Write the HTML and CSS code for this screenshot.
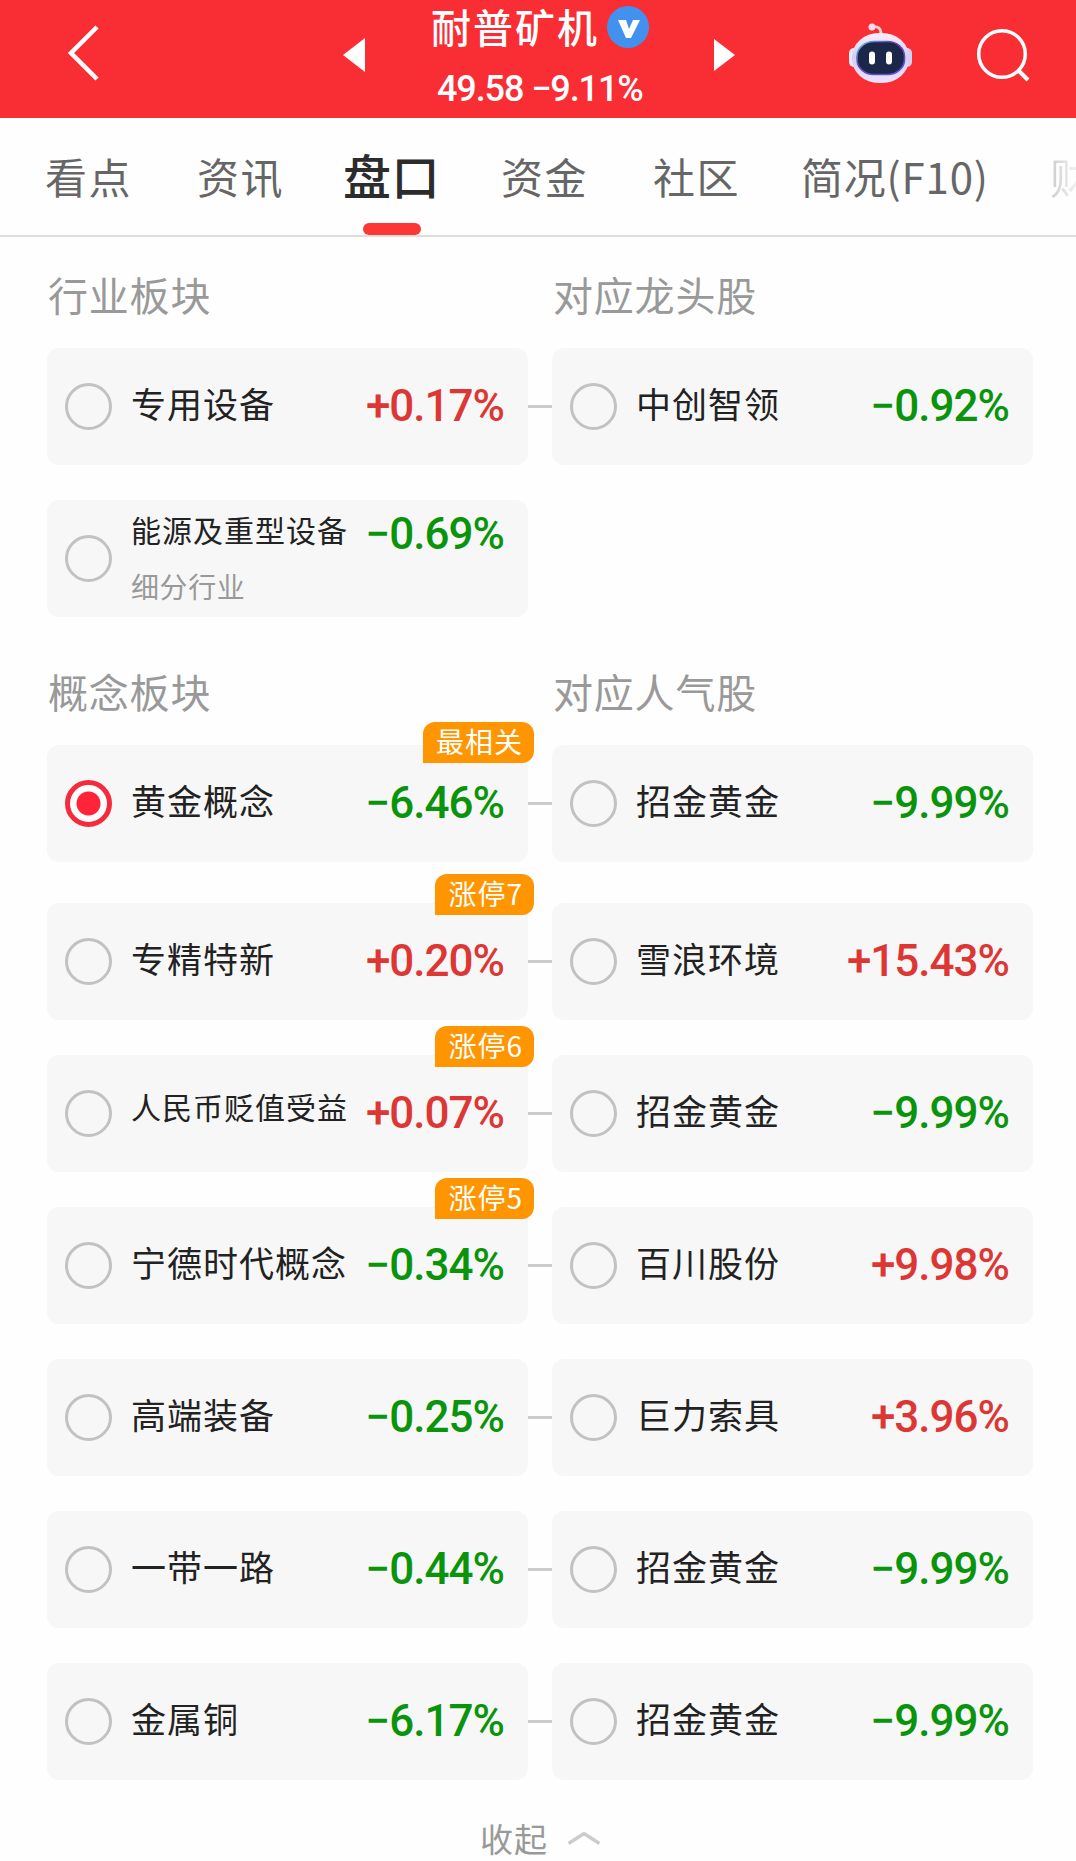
FILE: index.html
```html
<!DOCTYPE html>
<html lang="zh-CN">
<head>
<meta charset="utf-8">
<title>耐普矿机</title>
<link rel="stylesheet" href="styles.css">
</head>
<body>
<header class="header">
  <svg class="back" width="40" height="64" viewBox="0 0 40 64"><path d="M33 7 7 33 33 59" fill="none" stroke="#fff" stroke-width="4.5"/></svg>
  <svg class="prev" width="22" height="36" viewBox="0 0 22 36"><path d="M22 1v34L0 18z" fill="#fff"/></svg>
  <div class="stock">
    <div class="stock-name"><span>耐普矿机</span>
      <svg width="42" height="42" viewBox="0 0 42 42"><circle cx="21" cy="21" r="21" fill="#4391ee"/><path d="M11 14h8l3 9 4-9h7L24 32h-5z" fill="#fff"/></svg>
    </div>
    <div class="stock-price">49.58 −9.11%</div>
  </div>
  <svg class="next" width="22" height="36" viewBox="0 0 22 36"><path d="M0 2v32L21 18z" fill="#fff"/></svg>
  <svg class="robot" width="64" height="62" viewBox="0 0 64 62">
    <defs>
      <linearGradient id="shell" x1="0" y1="0" x2="0" y2="1"><stop offset="0" stop-color="#fbeefa"/><stop offset=".5" stop-color="#d3cff5"/><stop offset="1" stop-color="#eee2fb"/></linearGradient>
      <linearGradient id="rim" x1="0" y1="0" x2="1" y2="1"><stop offset="0" stop-color="#55c4df"/><stop offset=".4" stop-color="#6941b5"/><stop offset="1" stop-color="#5657d9"/></linearGradient>
    </defs>
    <path d="M23 6c6-1 9 1 9 7" fill="none" stroke="#ffd5df" stroke-width="2.6"/><circle cx="23" cy="6" r="3.500" fill="#ffdce4"/>
    <rect x="0" y="27" width="10" height="19" rx="5" fill="#eee7fb"/><rect x="53" y="27" width="10" height="19" rx="5" fill="#d6cdf5"/>
    <rect x="3" y="12" width="57" height="50" rx="27" ry="24" fill="url(#shell)"/>
    <rect x="8" y="20.500" width="47.500" height="33" rx="17" ry="15" fill="#1b2748" stroke="url(#rim)" stroke-width="1.600"/>
    <rect x="20" y="30.500" width="6" height="13" rx="3" fill="#fff"/><rect x="37" y="30.500" width="6" height="13" rx="3" fill="#fff"/>
  </svg>
  <svg class="search" width="56" height="56" viewBox="0 0 56 56"><circle cx="26" cy="27" r="23.300" fill="none" stroke="#fff" stroke-width="3.500"/><path d="M42 43 52 53" stroke="#fff" stroke-width="4"/></svg>
</header>
<nav class="tabs">
  <span class="tab">看点</span><span class="tab">资讯</span><span class="tab active">盘口</span><span class="tab">资金</span><span class="tab">社区</span><span class="tab f10">简况(F10)</span><span class="tab faded">财</span>
</nav>
<main>
  <section class="industry">
    <div class="heads"><h2>行业板块</h2><h2>对应龙头股</h2></div>
    <div class="row linked">
      <div class="card"><i class="radio"></i><span class="name">专用设备</span><span class="pct up">+0.17%</span></div>
      <div class="card"><i class="radio"></i><span class="name">中创智领</span><span class="pct down">−0.92%</span></div>
    </div>
    <div class="row">
      <div class="card stacked"><i class="radio"></i><span class="name"><span class="small">能源及重型设备</span><span class="sub">细分行业</span></span><span class="pct down">−0.69%</span></div>
    </div>
  </section>
  <section class="concept">
    <div class="heads"><h2>概念板块</h2><h2>对应人气股</h2></div>
    <div class="row linked first">
      <div class="card"><i class="radio checked"></i><span class="name">黄金概念</span><span class="pct down">−6.46%</span><b class="badge">最相关</b></div>
      <div class="card"><i class="radio"></i><span class="name">招金黄金</span><span class="pct down">−9.99%</span></div>
    </div>
    <div class="row linked">
      <div class="card"><i class="radio"></i><span class="name">专精特新</span><span class="pct up">+0.20%</span><b class="badge">涨停7</b></div>
      <div class="card"><i class="radio"></i><span class="name">雪浪环境</span><span class="pct up">+15.43%</span></div>
    </div>
    <div class="row linked">
      <div class="card"><i class="radio"></i><span class="name small">人民币贬值受益</span><span class="pct up">+0.07%</span><b class="badge">涨停6</b></div>
      <div class="card"><i class="radio"></i><span class="name">招金黄金</span><span class="pct down">−9.99%</span></div>
    </div>
    <div class="row linked">
      <div class="card"><i class="radio"></i><span class="name">宁德时代概念</span><span class="pct down">−0.34%</span><b class="badge">涨停5</b></div>
      <div class="card"><i class="radio"></i><span class="name">百川股份</span><span class="pct up">+9.98%</span></div>
    </div>
    <div class="row linked">
      <div class="card"><i class="radio"></i><span class="name">高端装备</span><span class="pct down">−0.25%</span></div>
      <div class="card"><i class="radio"></i><span class="name">巨力索具</span><span class="pct up">+3.96%</span></div>
    </div>
    <div class="row linked">
      <div class="card"><i class="radio"></i><span class="name">一带一路</span><span class="pct down">−0.44%</span></div>
      <div class="card"><i class="radio"></i><span class="name">招金黄金</span><span class="pct down">−9.99%</span></div>
    </div>
    <div class="row linked">
      <div class="card"><i class="radio"></i><span class="name">金属铜</span><span class="pct down">−6.17%</span></div>
      <div class="card"><i class="radio"></i><span class="name">招金黄金</span><span class="pct down">−9.99%</span></div>
    </div>
  </section>
  <div class="collapse"><span>收起</span><svg width="34" height="16" viewBox="0 0 34 16"><path d="M1.500 13.500 17 3.500 32.500 13.500" fill="none" stroke="#ccc" stroke-width="3.500"/></svg></div>
</main>
</body>
</html>
```
FILE: styles.css
```css
* { box-sizing: border-box; }
body {
  margin: 0;
  width: 1076px;
  height: 1861px;
  overflow: hidden;
  background: #fefefe;
  color: #222;
  font-family: "Noto Sans CJK SC", sans-serif;
}
svg { display: block; flex: none; }

.header {
  display: flex;
  height: 118px;
  background: #f92e34;
  color: #fff;
}
.back { margin: 20px 0 0 64px; }
.prev { margin: 37px 0 0 239px; }
.stock { width: 218px; margin-left: 66px; }
.stock-name {
  display: flex;
  align-items: center;
  height: 54px;
  font-size: 40px;
  font-weight: 500;
  letter-spacing: 2px;
  line-height: 52px;
  white-space: nowrap;
}
.stock-name span { padding-bottom: 2px; }
.stock-name svg { margin-left: 8px; }
.stock-price {
  margin: 14px 0 0 6px;
  font: 500 36px/42px Roboto, sans-serif;
  letter-spacing: -1.1px;
  white-space: nowrap;
}
.next { margin: 37px 0 0 65px; }
.robot { margin: 21px 0 0 113px; }
.search { margin: 27px 0 0 63px; }

.tabs {
  display: flex;
  height: 119px;
  padding-left: 45px;
  border-bottom: 2px solid #dedede;
  overflow: hidden;
  color: #666;
  font-size: 42px;
  letter-spacing: 1.5px;
  line-height: 115px;
  white-space: nowrap;
}
.tab { flex: none; width: 87px; margin-right: 65px; }
.tab.active {
  position: relative;
  width: 96px;
  margin: 0 62px 0 -6px;
  color: #2c2c2c;
  font-size: 48px;
  font-weight: 500;
  letter-spacing: 0.5px;
  line-height: 112px;
}
.tab.active::after {
  content: "";
  position: absolute;
  left: 20px;
  bottom: 0;
  width: 58px;
  height: 12px;
  border-radius: 6px;
  background: #fd3834;
}
.tab.f10 { width: 186px; margin: 0 63px 0 -4px; letter-spacing: 0.8px; }
.tab.faded {
  width: 28px;
  margin: 0;
  background: linear-gradient(90deg, #ccc, #f4f4f4);
  -webkit-background-clip: text;
  background-clip: text;
  color: transparent;
}

main { padding: 0 43px 0 47px; }
.heads {
  display: grid;
  grid-template-columns: 481px 481px;
  gap: 24px;
  padding-left: 1px;
}
h2 {
  margin: 0;
  color: #999;
  font-size: 40px;
  font-weight: 400;
  letter-spacing: 0.8px;
  line-height: 58px;
  padding-bottom: 2px;
}
.industry { padding-top: 28px; }
.industry .row { margin-top: 23px; }
.industry .row + .row { margin-top: 35px; }
.concept { padding-top: 45px; }
.row {
  display: grid;
  grid-template-columns: 481px 481px;
  gap: 24px;
  margin-top: 35px;
}
.row.first { margin-top: 23px; }
.row.first + .row { margin-top: 41px; }
.linked {
  background: linear-gradient(#ccc, #ccc) 481px 57px / 24px 3px no-repeat;
}
.card {
  position: relative;
  display: flex;
  align-items: center;
  height: 117px;
  padding: 0 24px 0 18px;
  border-radius: 12px;
  background: #f7f7f7;
}
.radio {
  flex: none;
  width: 47px;
  height: 47px;
  margin-right: 19px;
  border: 3px solid #c2c2c2;
  border-radius: 50%;
}
.radio.checked {
  border: 5px solid #f52b3c;
  background: radial-gradient(circle, #ff2439 11.5px, #fff 12.5px);
}
.name {
  flex: 1;
  padding-bottom: 8px;
  font-size: 35px;
  letter-spacing: 1px;
  line-height: 50px;
  white-space: nowrap;
}
.small { font-size: 30px; letter-spacing: 1px; }
.name.small { padding-bottom: 16px; }
.pct {
  flex: none;
  padding-bottom: 2px;
  font: 500 44px/52px Roboto, sans-serif;
  letter-spacing: -1px;
}
.up { color: #dd3735; }
.down { color: #0a940c; }
.stacked .name { display: flex; flex-direction: column; padding: 0; }
.stacked .small { line-height: 56px; margin-top: -1px; }
.stacked .sub { color: #999; font-size: 28px; line-height: 58px; letter-spacing: 0.6px; }
.stacked .pct { align-self: flex-start; margin-top: 8px; }
.badge {
  position: absolute;
  top: -29px;
  right: -6px;
  height: 41px;
  padding: 0 11px 0 13px;
  border-radius: 12px 12px 12px 0;
  background: #ff9500;
  color: #fff;
  font-size: 28px;
  font-weight: 400;
  letter-spacing: 1px;
  line-height: 39px;
}
.first .badge { top: -23px; }
.collapse {
  display: flex;
  align-items: center;
  height: 50px;
  margin: 33px 0 0 433px;
  color: #999;
  font-size: 33px;
  letter-spacing: 1px;
}
.collapse span { padding-bottom: 1px; }
.collapse svg { margin-left: 19px; }
```
